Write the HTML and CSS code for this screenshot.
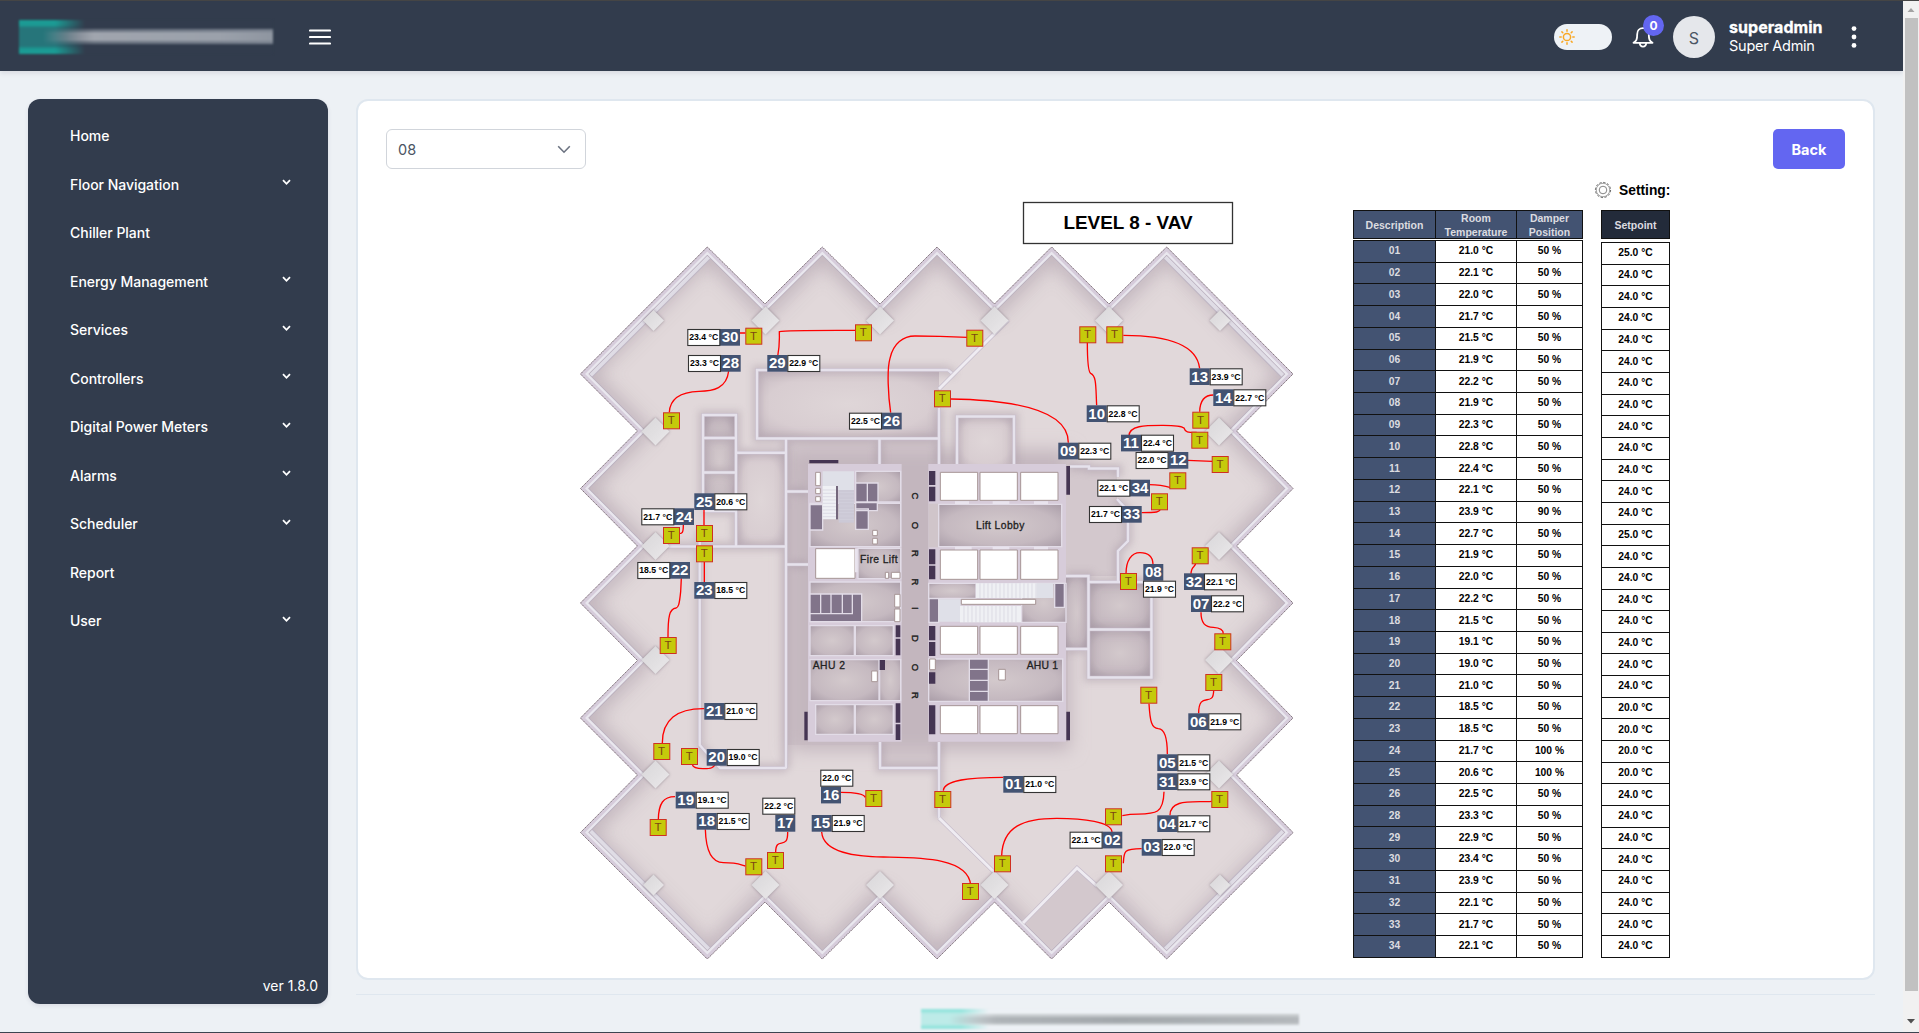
FILE: index.html
```html
<!DOCTYPE html>
<html lang="en">
<head>
<meta charset="utf-8">
<title>Level 8 - VAV</title>
<link rel="stylesheet" href="styles.css">
</head>
<body>
<div class="window">
  <div class="app">
    <header class="topbar">
      <div class="logo"></div>
      <svg class="burger" width="22" height="16" viewBox="0 0 22 16"><path d="M1 1.5H21M1 8H21M1 14.5H21" stroke="#fff" stroke-width="2.2" stroke-linecap="round"/></svg>
      <div class="topbar-right">
        <div class="theme-toggle">
          <svg width="16" height="16" viewBox="0 0 16 16" fill="none" stroke="#f9a825" stroke-width="1.5" stroke-linecap="round"><circle cx="8" cy="8" r="3.6"/><path d="M8 .8V2.2M8 13.8V15.2M.8 8H2.2M13.8 8H15.2M2.9 2.9L3.800 3.800M12.200 12.200L13.1 13.1M2.9 13.1L3.800 12.200M12.200 3.800L13.1 2.9"/></svg>
        </div>
        <div class="bell">
          <svg width="22" height="22" viewBox="0 0 22 22" fill="none" stroke="#fff" stroke-width="1.8" stroke-linejoin="round"><path d="M11 2.2C7.300 2.200 5.200 4.800 5.200 8.200C5.200 13.400 4.400 15 1.500 16.800H20.500C17.600 15 16.800 13.400 16.800 8.200C16.800 4.800 14.700 2.200 11 2.200Z"/><path d="M7.800 17C8 21.800 14 21.800 14.200 17"/></svg>
          <span class="badge">0</span>
        </div>
        <div class="avatar">S</div>
        <div class="who"><b>superadmin</b><span>Super Admin</span></div>
        <svg class="dots" width="6" height="22" viewBox="0 0 6 22" fill="#fff"><circle cx="3" cy="2.600" r="2.400"/><circle cx="3" cy="11" r="2.400"/><circle cx="3" cy="19.400" r="2.400"/></svg>
      </div>
    </header>

    <div class="body">
      <nav class="sidebar">
        <ul class="menu" id="menu"></ul>
        <div class="version">ver 1.8.0</div>
      </nav>
      <div class="content">
        <main class="card">
          <div class="toolbar">
            <div class="select"><span>08</span><svg width="14" height="9" viewBox="0 0 14 9" fill="none" stroke="#6b7280" stroke-width="1.6"><path d="M1.200 1.200L7 7.200L12.800 1.200"/></svg></div>
            <button class="back">Back</button>
          </div>
          <div class="stage">
            <svg class="plan" width="730" height="780" viewBox="570 190 730 780">
              <defs>
                <path id="shell" d="M707.300 247L765 304L822.300 247L880 304L937 247L994.500 304L1051.600 247L1109 304L1166.700 247L1293 374L1236.500 431L1293 488.500L1236.500 546L1293 603L1236.500 660.500L1293 718L1236.500 775L1293 832.500L1166.700 959L1109 902L1051.600 959L994.500 902L937 959L880 902L822.300 959L765 902L707.300 959L580.500 832.500L637.500 775L580.500 718L637.500 660.500L580.500 603L637.500 546L580.500 488.500L637.500 431L580.500 374Z"/>
                <path id="long-walls" d="M580.500 374L707.300 247M1166.700 247L1293 374M580.500 832.500L707.300 959M1166.700 959L1293 832.500"/>
                <clipPath id="inside"><use href="#shell"/></clipPath>
                <radialGradient id="room" r=".75"><stop offset="0" stop-color="#d3c9cc"/><stop offset=".6" stop-color="#c5b9c0"/><stop offset="1" stop-color="#a497a3"/></radialGradient>
                <radialGradient id="hall" r=".75"><stop offset="0" stop-color="#dfd6d8"/><stop offset=".6" stop-color="#d8cdd1"/><stop offset="1" stop-color="#bfb2bb"/></radialGradient>
                <linearGradient id="diamond" x1="0" y1="0" x2="1" y2="1"><stop offset="0" stop-color="#d9d7da"/><stop offset=".5" stop-color="#e1dfe1"/><stop offset="1" stop-color="#ebe9eb"/></linearGradient>
                <filter id="soft" x="-20%" y="-20%" width="140%" height="140%"><feGaussianBlur stdDeviation="9"/></filter>
                <filter id="edge" x="-20%" y="-20%" width="140%" height="140%"><feGaussianBlur stdDeviation="3.500"/></filter>
                <path id="partitions" d="M948 370H757V438.500H939 M948 370L954 375 M786 438V768.500 M736 452.700H786 M703 500V415H736V546 M703 438H736M703 472.500H736M703 511H736 M667 546.500H786 M699.700 530V745L720 768H786 M879.500 438V466 M786 491.500H808M786 564.500H808 M880 742V768H939 M939 408V466 M939 742V818 M957 466V416.500H1014V466 M1070 466.500H1089V468.500H1118V477 M1117 499L1128 511V541L1118 551V582 M1066 576H1088.500V677.500H1151.500V582H1088 M1088 629.500H1151 M1066 649H1088"/>
              </defs>
              <use href="#shell" fill="#e1d8da"/>
              <g clip-path="url(#inside)">
                <use href="#shell" fill="none" stroke="#bdb0b9" stroke-width="24" opacity=".85" filter="url(#soft)"/>
                <path d="M786 438H939V466H1068V742H939V768H880V745H786Z" fill="#d3c8cd"/>
                <rect x="790" y="450" width="280" height="300" fill="#c3b6be" filter="url(#soft)"/>
                <rect x="757" y="370" width="182" height="68" fill="url(#hall)"/>
                <rect x="703" y="415" width="33" height="95" fill="url(#room)"/>
                <rect x="736" y="453" width="50" height="93" fill="url(#hall)"/>
                <rect x="957" y="416" width="57" height="50" fill="url(#hall)"/>
                <rect x="1089" y="582" width="62" height="47" fill="url(#room)"/>
                <rect x="1089" y="629" width="62" height="48" fill="url(#room)"/>
                <rect x="1066" y="576" width="22" height="73" fill="url(#room)"/>
                <path d="M1066 468H1117V499L1128 511V541L1117 551V576H1066Z" fill="#d3c8cd"/>
                <path d="M1077 868L1097 886L1109 902L1051 959L1023 923Z" fill="#d3c8cd"/>
                <use href="#partitions" fill="none" stroke="#a697a4" stroke-width="9" opacity=".42" filter="url(#edge)"/>
                <use href="#long-walls" fill="none" stroke="#bfb6c4" stroke-width="22"/>
                <use href="#long-walls" fill="none" stroke="#dfdce5" stroke-width="20"/>
                <use href="#shell" fill="none" stroke="#b9afbd" stroke-width="12.500"/>
                <use href="#shell" fill="none" stroke="#e9e7ee" stroke-width="11"/>
                <use href="#shell" fill="none" stroke="#d6ccdb" stroke-width="6.500"/>
              </g>
              <use href="#shell" fill="none" stroke="#7e7077" stroke-width="1" stroke-dasharray="1.500 .8"/>
              <use href="#partitions" fill="none" stroke="#c7bdcb" stroke-width="3.600"/>
              <use href="#partitions" fill="none" stroke="#e6e2ec" stroke-width="2.400"/>
              <path d="M1008 320L939 389M939 818L994 872M1097 886L1077 868L1023 923" fill="none" stroke="#c7bdcb" stroke-width="4.400"/>
              <path d="M1008 320L939 389M939 818L994 872M1097 886L1077 868L1023 923" fill="none" stroke="#efecf2" stroke-width="3"/>
              <g class="pillars" id="pillars" fill="url(#diamond)"></g>

              <g id="core" transform="translate(780 440) scale(.33333)">
                <path d="M84 72H365V905H84ZM445 72H858V905H445Z" fill="#d7ccda"/>
                <path d="M445 191H478V322H445Z" fill="#d0c5ca"/>
                <g fill="url(#room)" stroke="#e2dce7" stroke-width="4">
                  <path d="M90 190H362V320H90Z"/><path d="M227 94H362V186H227Z"/>
                  <path d="M234 325H362V416H234Z"/><path d="M90 426H362V545H90Z"/><path d="M90 557H223V647H90Z"/><path d="M226 557H340V647H226Z"/>
                  <path d="M90 659H297V782H90Z"/><path d="M299 659H362V782H299Z"/><path d="M107 794H223V883H107Z"/><path d="M226 794H340V883H226Z"/>
                  <path d="M476 193H845V320H476Z"/><path d="M446 430H588V475H446Z"/><path d="M725 430H858V547H725Z"/><path d="M446 657H848V784H446Z"/>
                </g>
                <g fill="#81748a" stroke="#e2dce7" stroke-width="4">
                  <path d="M227 129H262V186H227ZM262 129H294V186H262ZM227 188H292V212H227ZM227 207H265V268H227ZM90 194H128V270H90Z"/>
                  <path d="M90 462H245V545H90ZM90 462H122V521H90ZM122 462H153V521H122ZM153 462H187V521H153ZM187 462H217V521H187Z"/>
                  <path d="M447 476H476V547H447ZM824 430H853V502H824Z"/>
                  <path d="M568 657H625V688H568ZM568 688H625V721H568ZM568 721H625V754H568ZM568 754H625V784H568Z"/>
                </g>
                <path fill="#453553" d="M88 60H175V70H88ZM447 93H466V135H447ZM447 140H466V184H447ZM447 328H466V373H447ZM447 377H466V418H447ZM447 558H466V601H447ZM447 606H466V648H447ZM447 697H466V731H447ZM447 796H466V883H447ZM347 556H361V592H347ZM347 596H361V646H347ZM299 660H315V690H299ZM347 790H361V848H347ZM347 853H361V900H347ZM859 78H870V164H859ZM859 815H870V901H859ZM73 815H83V901H73Z"/>
                <g>
                  <path fill="#dfe0e8" d="M128 94H222V150H128ZM588 430H820V474H588ZM476 478H542V545H476ZM540 498H723V547H540Z"/>
                  <path fill="#eff0f4" d="M128 138H168V238H128ZM588 430H770V474H588ZM540 498H723V547H540Z"/>
                  <path fill="#ccc9d6" d="M176 150H222V248H176Z"/>
                  <path fill="#74677c" d="M168 138H174V238H168Z"/>
                  <path id="treads" fill="none" stroke="#d3d2de" stroke-width="2"/>
                </g>
                <g fill="#fff" stroke="#a69596" stroke-width="3">
                  <path id="lifts"/>
                  <path d="M107 326H225V415H107ZM107 97H121V137H107ZM107 145H121V161H107ZM107 170H121V184H107ZM278 271H292V287H278ZM278 295H292V312H278ZM316 397H326V415H316ZM334 397H360V415H334ZM344 463H360V501H344ZM344 507H360V545H344ZM544 478H767V493H544ZM449 657H466V689H449ZM275 693H292V725H275ZM656 688H676V720H656Z"/>
                </g>
                <path fill="#e9e4ee" d="M525 184H567V192H525ZM638 184H688V192H638ZM762 184H804V192H762ZM525 320H575V328H525ZM638 320H688V328H638ZM762 320H804V328H762ZM225 326H233V397H225Z"/>
                <g class="room-name">
                  <text x="588" y="267" textLength="145">Lift Lobby</text>
                  <text x="240" y="369" textLength="113">Fire Lift</text>
                  <text x="98" y="688" textLength="97">AHU 2</text>
                  <text x="740" y="688" textLength="94">AHU 1</text>
                </g>
                <g class="corridor" id="corridor"></g>
              </g>

              <g class="wires">
                <g transform="translate(570 230) scale(.33333)"><path d="M510 309H526M623 380C630 340 628 330 628 305C650 300 780 301 856 301M476 423C470 475 430 484 387 484C330 486 300 505 298 547M402 833V887M340 885C340 912 335 910 326 911M334 1045L332 1085C328 1125 325 1132 318 1134C298 1136 294 1160 294 1221M403 996V1056M962 548C955 500 950 420 960 385C970 340 1000 318 1035 318L1110 319L1192 322"/></g>
                <g transform="translate(930 190) scale(.33333)"><path d="M472 455C472 500 474 545 482 550C500 558 497 590 500 646M580 436C700 436 800 460 809 535M62 627C250 630 415 660 415 758M850 615C820 615 810 635 809 665M597 740C595 705 650 706 700 706C735 706 755 708 762 714C766 727 772 727 800 727M773 811L847 814M657 884C690 884 700 886 722 893M635 968C680 968 690 966 690 958M588 1152C588 1110 605 1088 630 1088C655 1088 668 1100 669 1122M783 1153C783 1125 797 1135 798 1115"/></g>
                <g transform="translate(570 590) scale(.33333)"><path d="M403 356C320 355 277 390 277 459M367 524C370 537 390 536 402 536C420 536 435 535 436 517M315 620C280 620 266 640 265 688M406 718C408 790 430 818 460 818C500 818 505 822 526 828M653 726C654 785 617 735 617 787M813 607C850 607 880 610 886 622M755 726C760 790 860 800 940 801C1040 803 1195 800 1202 885"/></g>
                <g transform="translate(930 590) scale(.33333)"><path d="M813 67C813 100 825 111 850 112C870 113 880 118 880 131M851 302C850 355 806 300 806 370M657 341C660 395 665 414 685 416C705 417 712 450 712 492M702 605C700 680 670 670 600 673L577 677M845 634C790 638 720 625 720 676M635 776C580 776 582 785 580 820M215 797C218 710 280 685 380 685C460 685 545 695 546 726M220 562C120 562 42 570 40 602"/></g>
              </g>
              <g id="sensors"></g>
              <g id="tags"></g>
              <rect x="1023.500" y="202.500" width="209" height="41" fill="#fff" stroke="#333" stroke-width="1.300"/>
              <text class="plan-title" x="1128" y="228.700" textLength="129" lengthAdjust="spacingAndGlyphs">LEVEL 8 - VAV</text>
            </svg>

            <section class="readings">
              <div class="setting">
                <svg width="18" height="18" viewBox="0 0 18 18" fill="none" stroke="#666"><circle cx="9" cy="9" r="7.600" stroke-width="1" stroke-dasharray="2.300 1.678"/><circle cx="9" cy="9" r="6.700" stroke-width=".6"/><circle cx="9" cy="9" r="3.800" stroke-width=".8"/></svg>
                <b>Setting:</b>
              </div>
              <div class="tables">
                <div class="grid status" id="status">
                  <div class="head">Description</div><div class="head">Room<br>Temperature</div><div class="head">Damper<br>Position</div>
                </div>
                <div class="grid setpoints" id="setpoints"><div class="head dark">Setpoint</div></div>
              </div>
            </section>
          </div>
        </main>
        <footer class="footer"><div class="footer-logo"></div></footer>
      </div>
    </div>
  </div>
  <div class="scrollbar">
    <svg width="16" height="17" viewBox="0 0 16 17"><path d="M4.500 11L8 7L11.500 11Z" fill="#a3a3a3"/></svg>
    <div class="thumb"></div>
    <svg width="16" height="17" viewBox="0 0 16 17"><path d="M4 6H12L8 10.500Z" fill="#505050"/></svg>
  </div>
</div>
<script src="app.js"></script>
</body>
</html>
```

FILE: styles.css
```css
* { box-sizing: border-box; }
body {
  margin: 0;
  background: #edf1f5;
  font-family: Inter, "Liberation Sans", sans-serif;
  font-size: 14px;
  overflow: hidden;
}
.window {
  display: grid;
  grid-template-columns: 1903px 16px;
  height: 1033px;
  border-top: 1px solid #454545;
  border-bottom: 1px solid #3c4450;
}
.app { display: flex; flex-direction: column; min-height: 0; overflow: hidden; }

.topbar {
  flex: none;
  height: 70px;
  display: flex;
  align-items: center;
  padding: 1px 46px 0 19px;
  background: #323c4d;
  color: #fff;
  box-shadow: 0 2px 5px rgba(60, 50, 70, .12);
}
.logo {
  width: 254px;
  height: 34px;
  background:
    linear-gradient(90deg, rgba(150,157,167,0) 24px, rgba(150,157,167,.35) 45px, #a0a5ae 75px, #9ba1ab 200px, #8e95a0) 0 12px / 254px 9px no-repeat,
    linear-gradient(90deg, rgba(130,138,150,0) 24px, rgba(130,138,150,.7) 75px, #7b8390) 0 9px / 254px 15px no-repeat,
    linear-gradient(90deg, rgba(50,60,77,0) 36px, #323c4d 66px),
    linear-gradient(#1b9b94 0 5px, #26757a 8px 26px, #1b9b94 29px);
  filter: blur(.8px);
}
.burger { margin-left: 36px; }
.topbar-right { margin-left: auto; display: flex; align-items: center; }
.theme-toggle {
  width: 58px;
  height: 26px;
  border-radius: 13px;
  background: #eef2f6;
  display: flex;
  align-items: center;
  padding-left: 5px;
}
.bell { position: relative; width: 22px; height: 22px; margin-left: 20px; }
.badge {
  position: absolute;
  left: 11px;
  top: -11px;
  width: 21px;
  height: 21px;
  border-radius: 50%;
  background: #6366f1;
  font-size: 12px;
  font-weight: 700;
  line-height: 21px;
  text-align: center;
}
.avatar {
  width: 42px;
  height: 42px;
  margin-left: 19px;
  border-radius: 50%;
  background: #e5e7eb;
  color: #4b5563;
  font-size: 16px;
  line-height: 45px;
  text-align: center;
}
.who { display: flex; flex-direction: column; margin-left: 14px; width: 96px; white-space: nowrap; }
.who b { font-size: 16px; line-height: 19px; letter-spacing: .05px; -webkit-text-stroke: .3px; }
.who span { font-size: 14.500px; line-height: 18px; letter-spacing: -.25px; }
.dots { margin-left: 26px; }

.body { display: flex; gap: 28px; padding: 28px 28px 0; flex: 1; min-height: 0; }
.sidebar {
  flex: none;
  width: 300px;
  height: 905px;
  border-radius: 12px;
  background: #323c4d;
  color: #fff;
  display: flex;
  flex-direction: column;
  justify-content: space-between;
  padding: 12.500px 10px 8px 42px;
  box-shadow: 0 2px 4px rgba(60, 50, 90, .1);
}
.menu { list-style: none; margin: 0; padding: 0 27px 0 0; }
.menu li {
  display: flex;
  align-items: center;
  justify-content: space-between;
  height: 48.500px;
  font-weight: 500;
  letter-spacing: -.03px;
}
.menu svg { margin-top: -3px; }
.version { text-align: right; line-height: 20px; font-size: 14px; }

.content { flex: none; width: 1519px; }
.card {
  height: 881px;
  border: 2px solid #dfe7ef;
  border-radius: 12px;
  background: #fff;
  padding: 28px 28px 0 28px;
}
.toolbar { display: flex; justify-content: space-between; height: 40px; }
.select {
  width: 200px;
  border: 1px solid #d1d5db;
  border-radius: 6px;
  display: flex;
  align-items: center;
  justify-content: space-between;
  padding: 0 14px 0 11px;
  color: #4b5563;
  font-size: 14.500px;
}
.back {
  width: 72px;
  border: 0;
  border-radius: 5px;
  background: #6366f1;
  color: #fff;
  font: 700 14.500px Inter, sans-serif;
}
.stage { display: flex; margin: 13px 0 0 184px; }
.plan { flex: none; margin-top: 8px; font-family: "Liberation Sans", Arial, sans-serif; }
.plan-title { font-size: 19px; font-weight: 700; text-anchor: middle; }
.pillars { filter: drop-shadow(0 0 1.5px rgba(110, 95, 110, .6)); }
.room-name { font-size: 31px; fill: #222; stroke: #222; stroke-width: .9; }
.corridor { font-size: 28px; fill: #222; stroke: #222; stroke-width: 1.2; text-anchor: middle; }
.wires path { fill: none; stroke: #f00; stroke-width: 4; }
.sensor rect { fill: #c5ca0b; stroke: #cf3122; stroke-width: 1; }
.sensor text { font-size: 11.500px; fill: #7c4612; text-anchor: middle; }
.tag-no { fill: #435372; }
.tag-no-text { font-size: 15px; font-weight: 700; fill: #fff; text-anchor: middle; }
.tag-box { fill: #fff; stroke: #333; stroke-width: 1.100; }
.tag-text { font-size: 9.500px; font-weight: 700; text-anchor: middle; }

.readings { margin-left: 53px; font-family: "Liberation Sans", Arial, sans-serif; }
.setting { display: flex; align-items: center; gap: 7px; height: 16px; margin-left: 241px; font-size: 13.800px; }
.tables { display: flex; align-items: flex-start; gap: 18px; margin-top: 12px; }
.grid { display: grid; color: #000; font-size: 10.300px; font-weight: 700; text-align: center; }
.grid > div { display: flex; align-items: center; justify-content: center; border: 1px solid #111; margin: 0 -1px -1px 0; padding-bottom: 1px; }
.status { grid-template-columns: 82px 81px 66px; grid-template-rows: 30px repeat(33, 21.730px); padding: 0 1px 1px 0; }
.setpoints { grid-template-columns: 68px; grid-template-rows: 32px repeat(33, 21.670px); padding: 0 1px 1px 0; }
.grid .head { background: #435372; color: #dcdce0; line-height: 14px; font-size: 10.500px; margin-bottom: 1px; padding: 0; }
.grid .head.dark { background: #232b3a; margin-bottom: 3px; }
.grid .unit { background: #435372; color: #dcdce0; }

.footer { display: flex; justify-content: center; margin-top: 14px; padding-top: 14px; border-top: 1px solid #dfe7ef; }
.footer-logo {
  width: 378px;
  height: 20px;
  margin-right: 12px;
  background:
    linear-gradient(90deg, rgba(155,160,165,0) 28px, rgba(155,160,165,.55) 75px, #a3a8ac 200px, #b4b8bc) 0 8px / 378px 6px no-repeat,
    linear-gradient(90deg, rgba(190,195,198,0) 28px, rgba(190,195,198,.8) 75px, #c6cacd) 0 5px / 378px 11px no-repeat,
    linear-gradient(90deg, rgba(237,241,245,0) 40px, #edf1f5 68px),
    linear-gradient(#93e4dc 0 2px, #bdebe8 5px 15px, #93e4dc 18px);
  filter: blur(.8px);
}

.scrollbar { display: flex; flex-direction: column; align-items: center; background: #f1f1f1; }
.thumb { width: 13px; height: 973px; background: #c1c1c1; }
.scrollbar svg:last-child { margin-top: auto; margin-bottom: 2px; }
```

FILE: app.js
```js
const byId = (id) => document.getElementById(id);

// Sidebar entries; 1 marks an expandable group.
const menu = [["Home"], ["Floor Navigation", 1], ["Chiller Plant"], ["Energy Management", 1], ["Services", 1],
  ["Controllers", 1], ["Digital Power Meters", 1], ["Alarms", 1], ["Scheduler", 1], ["Report"], ["User", 1]];
const chevron = '<svg width="9" height="7" viewBox="0 0 9 7" fill="none" stroke="#fff" stroke-width="1.8"><path d="M1 1.200L4.500 4.800L8 1.200"/></svg>';
byId("menu").innerHTML = menu.map(([t, sub]) => `<li><span>${t}</span>${sub ? chevron : ""}</li>`).join("");

// Unit, room temperature, damper position (%), setpoint.
const rows = [
  ["01", "21.0", 50, 25], ["02", "22.1", 50, 24], ["03", "22.0", 50, 24], ["04", "21.7", 50, 24],
  ["05", "21.5", 50, 24], ["06", "21.9", 50, 24], ["07", "22.2", 50, 24], ["08", "21.9", 50, 24],
  ["09", "22.3", 50, 24], ["10", "22.8", 50, 24], ["11", "22.4", 50, 24], ["12", "22.1", 50, 24],
  ["13", "23.9", 90, 24], ["14", "22.7", 50, 25], ["15", "21.9", 50, 24], ["16", "22.0", 50, 24],
  ["17", "22.2", 50, 24], ["18", "21.5", 50, 24], ["19", "19.1", 50, 24], ["20", "19.0", 50, 24],
  ["21", "21.0", 50, 24], ["22", "18.5", 50, 20], ["23", "18.5", 50, 20], ["24", "21.7", 100, 20],
  ["25", "20.6", 100, 20], ["26", "22.5", 50, 24], ["28", "23.3", 50, 24], ["29", "22.9", 50, 24],
  ["30", "23.4", 50, 24], ["31", "23.9", 50, 24], ["32", "22.1", 50, 24], ["33", "21.7", 50, 24],
  ["34", "22.1", 50, 24],
];
byId("status").insertAdjacentHTML("beforeend", rows.map(([u, t, d]) =>
  `<div class="unit">${u}</div><div>${t} °C</div><div>${d} %</div>`).join(""));
byId("setpoints").insertAdjacentHTML("beforeend", rows.map((r) => `<div>${r[3]}.0 °C</div>`).join(""));

// Pillars: centre and half diagonal.
const pillars = [];
for (const x of [765.5, 880, 994.5, 1109]) pillars.push([x, 320.5, 14], [x, 885, 14]);
for (const y of [431.5, 546, 660, 774.5]) pillars.push([655.5, y, 14], [1219, y, 14]);
for (const y of [320.5, 885]) pillars.push([653.5, y, 10.5], [1220, y, 10.5]);
byId("pillars").innerHTML = pillars.map(([x, y, r]) =>
  `<path d="M${x} ${y - r}L${x + r} ${y}L${x} ${y + r}L${x - r} ${y}Z"/>`).join("");

// Lift cars and stair treads in the core.
let lifts = "";
for (const y of [97, 330, 559, 797]) for (const x of [481, 600, 722]) lifts += `M${x} ${y}h112v${y === 330 ? 88 : 84}h-112z`;
byId("lifts").setAttribute("d", lifts);
let treads = "";
for (let y = 150; y < 236; y += 10) treads += `M128 ${y}H168M176 ${y + 8}H222`;
for (let x = 600; x < 770; x += 12) treads += `M${x} 430V474`;
for (let x = 552; x < 720; x += 12) treads += `M${x} 498V547`;
byId("treads").setAttribute("d", treads);
const letterY = [168, 256, 340, 426, 505, 595, 682, 766];
byId("corridor").innerHTML = [..."CORRIDOR"].map((c, i) =>
  `<text transform="translate(395 ${letterY[i]}) rotate(90)">${c}</text>`).join("");

// Thermostats.
const sensors = [[745.3, 327.7], [855, 324.3], [663, 412.3], [696, 525], [696, 545.3], [663, 527], [934, 390.3],
  [966.3, 329.7], [1079.3, 326.3], [1106.3, 326.3], [1192.3, 411.7], [1191.3, 431.7], [1211.7, 456], [1169.3, 472.3],
  [1151, 493.3], [1120, 573], [1191.7, 547.3], [659.7, 637], [653.3, 743], [681, 748], [649.7, 819], [745.3, 858.3],
  [767, 852], [865.3, 790], [1214.3, 633.3], [1205.3, 674], [1140.3, 686.7], [1211.3, 791], [1105, 808.3],
  [1105, 855.3], [994, 855.3], [962, 883], [934.3, 791]];
byId("sensors").innerHTML = sensors.map(([x, y]) =>
  `<g class="sensor"><rect x="${x + 0.5}" y="${y + 0.5}" width="16" height="16"/><text x="${x + 8.2}" y="${y + 12}">T</text></g>`).join("");

// VAV tags: unit, tag position, offset of the temperature box, temperature.
const R = [20, 0], L = [-32.7, 0];
const tags = [["30", 720, 329, L, "23.4"], ["28", 720.7, 355, L, "23.3"], ["29", 767.3, 355, R, "22.9"],
  ["26", 881.7, 412.7, L, "22.5"], ["25", 694.3, 493.3, R, "20.6"], ["24", 674, 508.3, L, "21.7"],
  ["22", 670, 562, L, "18.5"], ["23", 694.3, 582, R, "18.5"], ["13", 1189.7, 368.3, R, "23.9"],
  ["14", 1213.3, 389.3, R, "22.7"], ["10", 1086.7, 405.3, R, "22.8"], ["11", 1121, 434.7, R, "22.4"],
  ["12", 1168.3, 452, L, "22.0"], ["09", 1058.3, 442.7, R, "22.3"], ["34", 1130, 479.7, L, "22.1"],
  ["33", 1121.7, 506, L, "21.7"], ["08", 1143.3, 564, [-0.3, 16.7], "21.9"], ["32", 1184, 573.3, R, "22.1"],
  ["07", 1191, 595.3, R, "22.2"], ["06", 1188.3, 713.3, R, "21.9"], ["05", 1157.3, 754.3, R, "21.5"],
  ["31", 1157.3, 773.3, R, "23.9"], ["04", 1157.3, 815.3, R, "21.7"], ["03", 1141.7, 839, R, "22.0"],
  ["02", 1102.3, 831.7, L, "22.1"], ["01", 1003.3, 776, R, "21.0"], ["21", 704.3, 703, R, "21.0"],
  ["20", 706.7, 749, R, "19.0"], ["19", 675.7, 791.7, R, "19.1"], ["18", 696.7, 813, R, "21.5"],
  ["17", 775.3, 815, [-13, -17.3], "22.2"], ["16", 821, 786.7, [-0.7, -17], "22.0"], ["15", 811.7, 815, R, "21.9"]];
byId("tags").innerHTML = tags.map(([n, x, y, [dx, dy], t]) =>
  `<rect class="tag-no" x="${x}" y="${y}" width="20" height="16.700"/><text class="tag-no-text" x="${x + 10}" y="${y + 13.2}">${n}</text>` +
  `<rect class="tag-box" x="${x + dx + 0.5}" y="${y + dy + 0.5}" width="32" height="16"/>` +
  `<text class="tag-text" x="${x + dx + 16.4}" y="${y + dy + 11.3}" textLength="29" lengthAdjust="spacingAndGlyphs">${t} °C</text>`).join("");
```
